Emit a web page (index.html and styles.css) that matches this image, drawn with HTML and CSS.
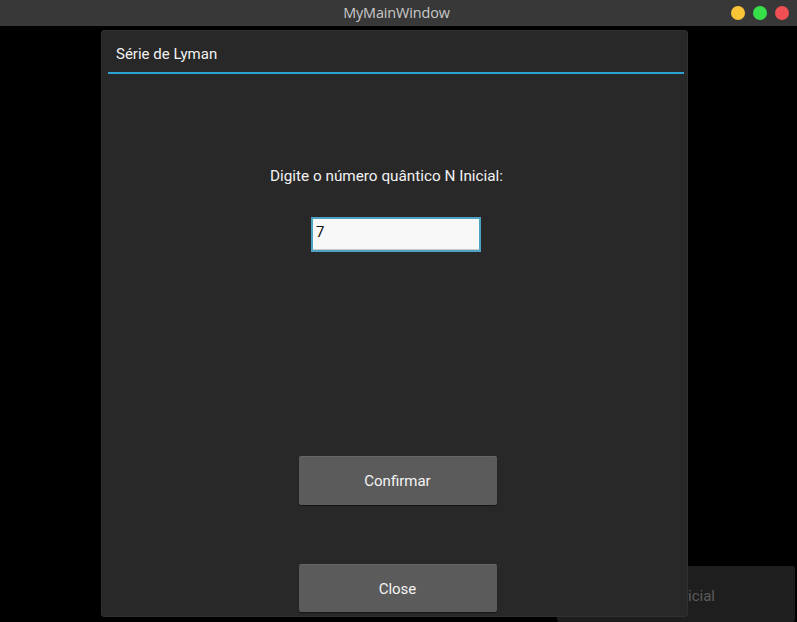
FILE: index.html
```html
<!DOCTYPE html>
<html>
<head>
<meta charset="utf-8">
<link rel="stylesheet" href="styles.css">
</head>
<body>
<div class="window">
  <div class="titlebar">
    <span class="title">MyMainWindow</span>
    <div class="lights">
      <span class="light yellow"></span>
      <span class="light green"></span>
      <span class="light red"></span>
    </div>
  </div>
  <div class="content">
    <div class="back-button"><span>N Inicial</span></div>
    <div class="dialog">
      <div class="dialog-header">Série de Lyman</div>
      <div class="dialog-rule"></div>
      <div class="dialog-body">
        <div class="label">Digite o número quântico N Inicial:</div>
        <div class="input">7</div>
        <div class="btn confirm">Confirmar</div>
        <div class="btn close">Close</div>
      </div>
    </div>
  </div>
</div>
</body>
</html>
```

FILE: styles.css
```css
html, body {
  margin: 0;
  padding: 0;
  background: #000;
}
.window {
  width: 797px;
  height: 622px;
  display: flex;
  flex-direction: column;
  overflow: hidden;
}
.titlebar {
  height: 26px;
  background: #383838;
  display: flex;
  align-items: center;
  justify-content: center;
  position: relative;
  flex: none;
}
.title {
  font-family: "Open Sans", "DejaVu Sans", sans-serif;
  font-size: 14.4px;
  color: #c9c9c9;
  letter-spacing: -0.1px;
  margin-left: -4px;
  margin-top: -1px;
}
.lights {
  position: absolute;
  right: 8px;
  top: 6px;
  display: flex;
  gap: 8px;
}
.light {
  width: 14px;
  height: 14px;
  border-radius: 50%;
  display: block;
}
.yellow { background: #f9c536; }
.green { background: #36e049; }
.red { background: #ef4f55; }
.content {
  flex: 1;
  position: relative;
  background: #000;
}
.back-button {
  position: absolute;
  left: 557px;
  top: 540px;
  width: 238px;
  height: 56px;
  background: #1e1e1e;
  border-radius: 2px;
  font-family: Roboto, sans-serif;
  font-size: 15px;
  color: #5b5b5b;
}
.back-button span {
  position: absolute;
  right: 80px;
  top: 21px;
}
.dialog {
  position: absolute;
  left: 101px;
  top: 4px;
  width: 585px;
  height: 585px;
  background: #282828;
  border: 1px solid #303030;
  border-radius: 3px;
  display: flex;
  flex-direction: column;
  font-family: Roboto, sans-serif;
  color: #f2f2f2;
}
.dialog-header {
  height: 41px;
  padding-left: 14px;
  font-size: 15px;
  line-height: 18px;
  display: flex;
  align-items: center;
  padding-top: 5px;
  box-sizing: border-box;
}
.dialog-rule {
  height: 2px;
  background: #2ba3d3;
  margin: 0 3px 0 6px;
}
.dialog-body {
  display: flex;
  flex-direction: column;
  align-items: center;
}
.label {
  margin-top: 93px;
  font-size: 15.3px;
  line-height: 18px;
  margin-left: -16px;
}
.input {
  margin-top: 32px;
  width: 163px;
  height: 31px;
  border: 2px solid #4ea3c4;
  background: #f8f8f8;
  color: #111;
  font-size: 15px;
  line-height: 26px;
  padding-left: 3px;
  box-sizing: content-box;
  margin-left: 3px;
  box-shadow: inset 0 -1px 0 #c8c8c8;
}
.btn {
  width: 198px;
  background: #5b5b5b;
  border-radius: 2px;
  display: flex;
  align-items: center;
  justify-content: center;
  font-size: 15px;
  color: #f4f4f4;
  box-shadow: 0 1px 1px rgba(0,0,0,0.5);
  border-top: 1px solid #666;
  box-sizing: border-box;
  margin-left: 6px;
}
.confirm {
  margin-top: 204px;
  height: 49px;
}
.close {
  margin-top: 59px;
  height: 48px;
}
```
